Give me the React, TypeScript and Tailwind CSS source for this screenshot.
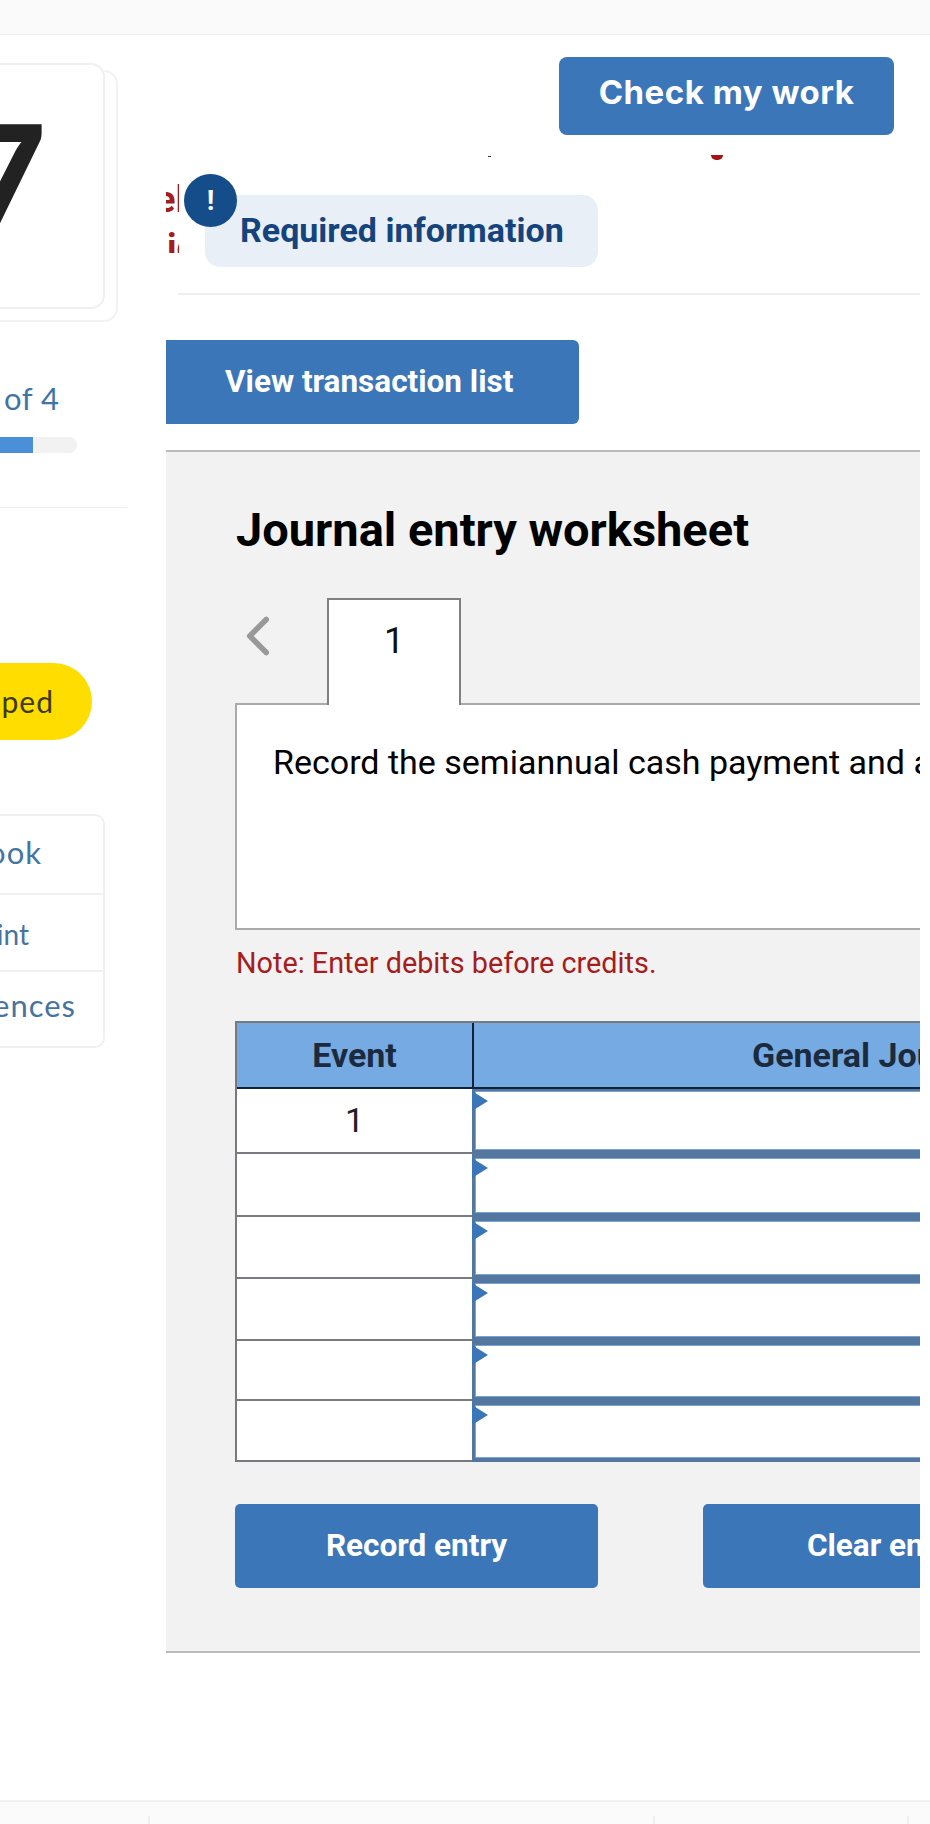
import { ChevronLeft } from "lucide-react";

const rows = [
  { height: "h-[65px]", event: "1", top: "border-t-2" },
  { height: "h-[63px]", event: "", top: "border-t-4" },
  { height: "h-[62px]", event: "", top: "border-t-4" },
  { height: "h-[62px]", event: "", top: "border-t-4" },
  { height: "h-[60px]", event: "", top: "border-t-4" },
  { height: "h-[61px]", event: "", top: "border-t-4" },
];

function Sidebar() {
  return (
    <aside className="w-[166px] shrink-0 overflow-hidden font-['Lato',sans-serif]">
      {/* QUESTION NUMBER CARD */}
      <div className="relative w-[118px] h-[259px] mt-[28px]">
        <div className="absolute left-[-40px] right-0 top-[7px] bottom-0 rounded-[14px] border-2 border-[#f2f2f2]"></div>
        <div className="absolute left-[-40px] right-[13px] top-0 bottom-[13px] rounded-[14px] border-2 border-[#f0f0f0] bg-white flex items-center justify-end overflow-hidden">
          <span className="text-[160px] leading-none font-bold text-[#222222] mr-[56px] mt-[-19px]">7</span>
        </div>
      </div>

      {/* PROGRESS */}
      <div className="h-[40px] mt-[56px] flex items-center pl-[4px] text-[31px] tracking-[0.5px] text-[#3f75a6] whitespace-nowrap">
        of 4
      </div>
      <div className="w-[77px] h-[16px] mt-[19px] bg-[#f2f2f2] rounded-r-full overflow-hidden">
        <div className="w-[33px] h-full bg-[#4a8fd8]"></div>
      </div>
      <div className="w-[127px] h-px bg-[#eeeeee] mt-[54px]"></div>

      {/* STATUS */}
      <div className="w-[92px] h-[77px] mt-[155px] bg-[#ffdd00] rounded-r-full flex items-center justify-end pr-[38px] text-[30px] tracking-[1px] text-[#3c3a1e]">
        ped
      </div>

      {/* LINKS */}
      <div className="w-[105px] mt-[74px] border-2 border-l-0 border-[#f0f0f0] rounded-r-[10px] text-[31px] tracking-[1px] text-[#4574a1]">
        <div className="h-[77px] flex items-center justify-end pr-[61px] pb-[4px] whitespace-nowrap">eBook</div>
        <div className="h-[77px] flex items-center justify-end pr-[74px] pt-[2px] border-t-2 border-[#f0f0f0] text-[28px] tracking-normal whitespace-nowrap">Print</div>
        <div className="h-[76px] flex items-center justify-end pr-[27px] pb-[8px] border-t-2 border-[#f0f0f0] whitespace-nowrap">References</div>
      </div>
    </aside>
  );
}

function JournalTable() {
  return (
    <div className="w-[900px] border-t-2 border-l-2 border-[#777b80]">
      {/* HEADER */}
      <div className="flex h-[66px] bg-[#76aae3] border-b-2 border-[#0f2238] text-[34px] font-bold text-[#1b2a3d]">
        <div className="w-[235px] shrink-0 flex items-center justify-center">Event</div>
        <div className="flex-1 flex items-center pl-[278px] border-l-2 border-[#0f2238] whitespace-nowrap">General Journal</div>
      </div>

      {/* ROWS */}
      {rows.map((row, i) => (
        <div key={i} className={`flex ${row.height}`}>
          <div className="w-[235px] shrink-0 bg-white border-b-2 border-[#777b80] flex items-center justify-center text-[34px] text-[#222222]">
            {row.event}
          </div>
          <div className={`relative flex-1 border-l-[3px] border-b-4 ${row.top} border-[#54779f] bg-white`}>
            <div className="h-full border-l border-y border-[#7ba4d6]"></div>
            <svg className="absolute left-[-3px] top-0" width="16" height="20" viewBox="0 0 16 20">
              <polygon points="0,0 16,10 0,20" fill="#3b76b9" />
            </svg>
          </div>
        </div>
      ))}
    </div>
  );
}

function Worksheet() {
  return (
    <section className="mt-[26px] h-[1203px] border-t-2 border-b-2 border-[#bbbbbb] bg-[#f2f2f2] pl-[69px] overflow-hidden font-['Roboto',sans-serif]">
      <h2 className="mt-[51px] ml-px text-[47px] leading-[54px] font-bold text-black whitespace-nowrap">Journal entry worksheet</h2>

      {/* TABS */}
      <div className="flex items-start h-[105px] mt-[41px] relative z-10">
        <ChevronLeft size={66} strokeWidth={2} className="text-[#999999] mt-[5px] ml-[-10px]" />
        <div className="w-[134px] h-[107px] ml-[36px] bg-white border-2 border-b-0 border-[#808080] flex justify-center pt-[20px] text-[36px] leading-[42px] text-[#111111]">
          1
        </div>
      </div>

      <div className="w-[900px] h-[227px] bg-white border-2 border-[#aaaaaa] pt-[36px] pl-[36px] text-[34px] leading-[42px] text-black whitespace-nowrap">
        Record the semiannual cash payment and amortization
      </div>

      <p className="mt-[15px] ml-px text-[28.8px] leading-[36px] text-[#a51d1d] whitespace-nowrap">Note: Enter debits before credits.</p>

      <div className="mt-[40px]">
        <JournalTable />
      </div>

      {/* ACTIONS */}
      <div className="flex gap-[105px] mt-[42px] w-[900px]">
        <button className="w-[363px] h-[84px] shrink-0 bg-[#3b76b9] rounded-[5px] text-[31.5px] font-bold text-white">Record entry</button>
        <button className="w-[363px] h-[84px] shrink-0 bg-[#3b76b9] rounded-[5px] text-[31.5px] font-bold text-white">Clear entry</button>
      </div>
    </section>
  );
}

export default function App() {
  return (
    <div className="w-[930px] h-[1824px] bg-white overflow-hidden flex flex-col">
      <div className="h-[35px] shrink-0 bg-[#fafafa] border-b border-[#eeeeee]"></div>

      <div className="flex flex-1">
        <Sidebar />

        <main className="flex-1 min-w-0 pr-[10px] font-['Roboto',sans-serif]">
          {/* TOP ACTION */}
          <div className="flex justify-end pr-[26px] mt-[22px]">
            <button className="w-[335px] h-[78px] bg-[#3b76b9] rounded-[8px] pb-[6px] font-['Inter',sans-serif] text-[33px] tracking-[0.5px] font-bold text-white">
              Check my work
            </button>
          </div>

          {/* CLIPPED HEADING REMAINS */}
          <div className="h-[5px] mt-[20px] flex items-start">
            <span className="w-[3px] h-px bg-[#333333] ml-[322px] mt-[1px]"></span>
            <span className="w-[12px] h-[5px] bg-[#a51212] rounded-b-full ml-[220px]"></span>
          </div>

          {/* REQUIRED INFORMATION */}
          <div className="relative flex mt-[35px] ml-[39px] pr-[22px]">
            <div className="absolute left-[-39px] top-[-22px] w-[13px] h-[80px] overflow-hidden pt-[3px] text-[36px] leading-[48px] font-bold text-[#a51c1c]">
              <div className="ml-[-10px] whitespace-nowrap">el</div>
              <div className="whitespace-nowrap ml-[1px]">ic</div>
            </div>
            <div className="w-[393px] h-[72px] bg-[#e8eff7] rounded-[15px] flex items-center pl-[35px] pb-[2px] text-[34px] font-bold text-[#15437c] whitespace-nowrap">
              Required information
            </div>
            <div className="absolute left-[-21px] top-[-21px] w-[53px] h-[53px] rounded-full bg-[#154c8a] flex items-center justify-center text-[28px] font-bold text-white">
              !
            </div>
          </div>

          <div className="h-[2px] bg-[#eeeeee] mt-[26px] ml-[12px]"></div>

          <button className="w-[413px] h-[84px] mt-[45px] bg-[#3b76b9] rounded-r-[6px] pl-[59px] text-left text-[31.5px] font-bold text-white block">
            View transaction list
          </button>

          <Worksheet />
        </main>
      </div>

      {/* FOOTER */}
      <div className="h-[24px] shrink-0 bg-[#fbfbfb] border-t-2 border-[#f0f0f0] flex items-end">
        <div className="w-[150px] h-[8px] border-r-2 border-[#eeeeee]"></div>
        <div className="w-[505px] h-[8px] border-r-2 border-[#eeeeee]"></div>
        <div className="w-[254px] h-[8px] border-r-2 border-[#eeeeee]"></div>
      </div>
    </div>
  );
}
